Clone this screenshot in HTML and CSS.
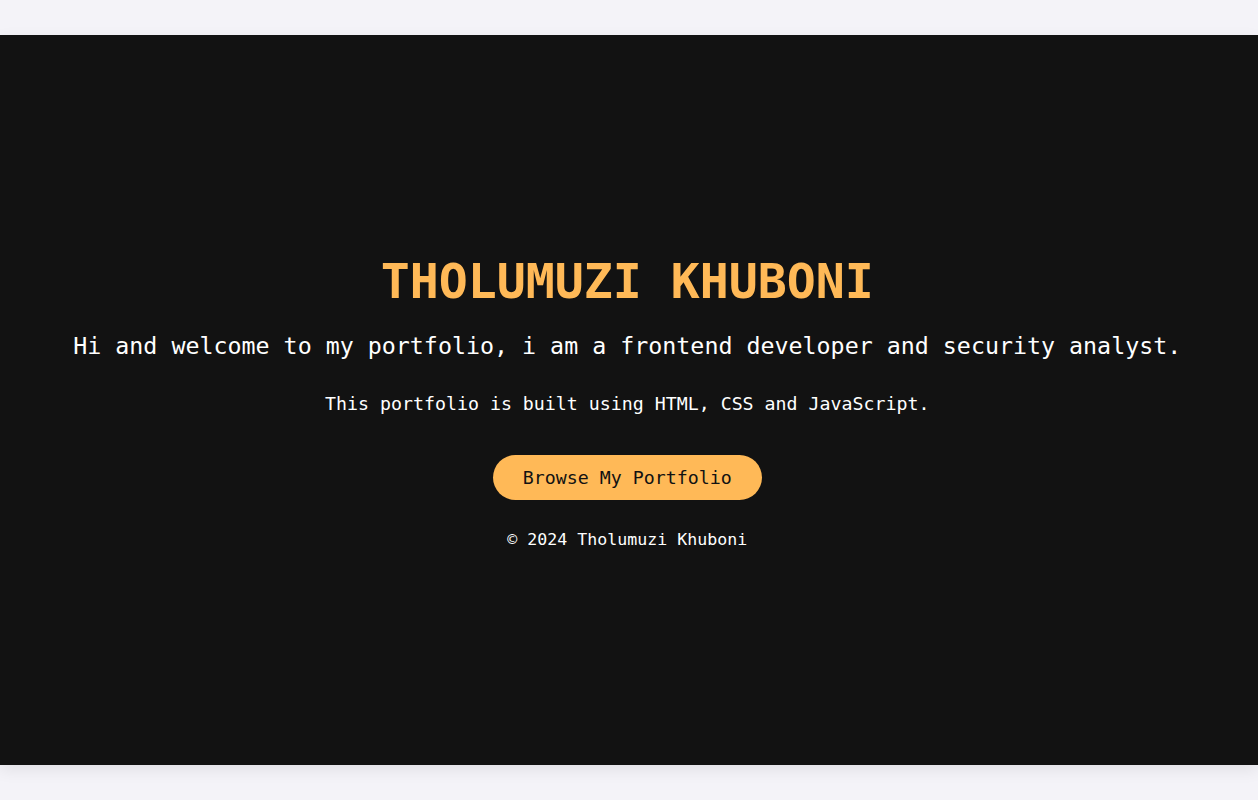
FILE: index.html
```html
<!DOCTYPE html>
<html lang="en">
<head>
<meta charset="utf-8">
<title>Tholumuzi Khuboni</title>
<link rel="stylesheet" href="styles.css">
</head>
<body>
<section class="hero">
  <h1 class="hero-title">THOLUMUZI KHUBONI</h1>
  <p class="hero-sub">Hi and welcome to my portfolio, i am a frontend developer and security analyst.</p>
  <p class="hero-note">This portfolio is built using HTML, CSS and JavaScript.</p>
  <a class="hero-btn" href="#">Browse My Portfolio</a>
  <footer class="hero-foot">© 2024 Tholumuzi Khuboni</footer>
</section>
</body>
</html>
```
FILE: styles.css
```css
html, body {
  margin: 0;
  padding: 0;
}
body {
  background: #f4f3f8;
  font-family: "DejaVu Sans Mono", monospace;
  color: #ffffff;
  height: 800px;
  overflow: hidden;
}
.hero {
  margin-top: 35px;
  height: 730px;
  box-sizing: border-box;
  padding: 3.7px 3.5px 0 0;
  background: #121212;
  box-shadow: 0 5px 15px rgba(0, 0, 0, 0.08);
  display: flex;
  flex-direction: column;
  align-items: center;
  justify-content: center;
  text-align: center;
}
.hero-title {
  margin: 0;
  font-size: 48.2px;
  line-height: 58px;
  font-weight: bold;
  color: #ffb957;
}
.hero-sub {
  margin: 20px 0 0;
  font-size: 23.3px;
  line-height: 32px;
}
.hero-note {
  margin: 29.3px 0 0;
  font-size: 18.25px;
  line-height: 26px;
}
.hero-btn {
  margin-top: 37.3px;
  display: inline-block;
  padding: 10px 30px;
  font-size: 18.25px;
  line-height: 25px;
  background: #ffb957;
  color: #121212;
  text-decoration: none;
  border-radius: 23px;
}
.hero-foot {
  margin-top: 28px;
  font-size: 16.6px;
  line-height: 24px;
}
```
